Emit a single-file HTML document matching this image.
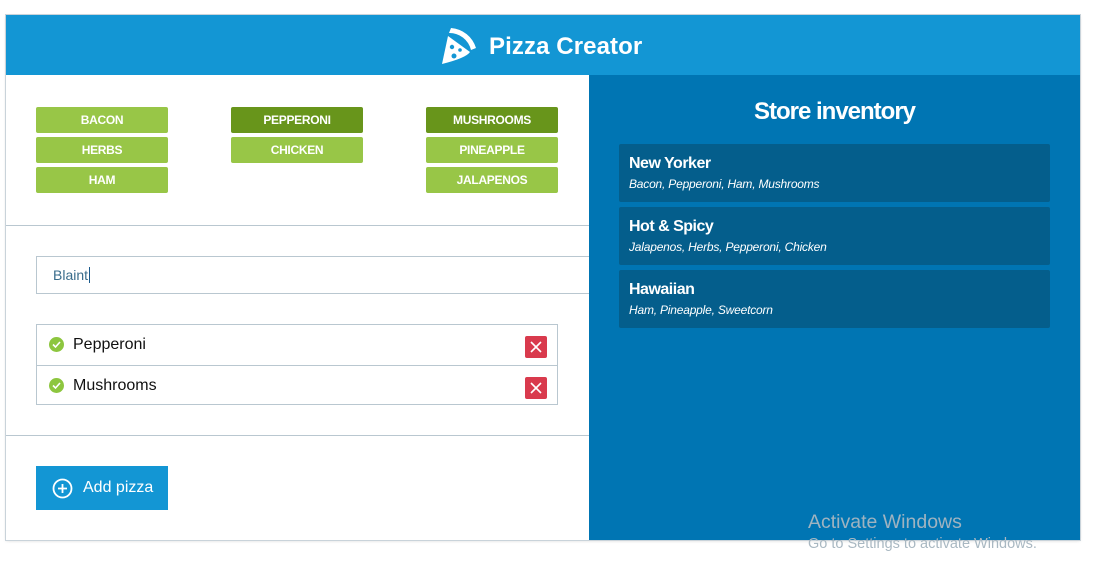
<!DOCTYPE html>
<html><head><style>
*{box-sizing:border-box;margin:0;padding:0}
body{width:1098px;height:568px;background:#fff;font-family:"Liberation Sans",sans-serif;position:relative;overflow:hidden}
.wrap{position:absolute;left:6px;top:15px;width:1074px;height:525px;overflow:hidden;box-shadow:0 0 0 1px #c9d3da,0 1px 3px rgba(0,0,0,.15)}
.hdr{position:absolute;left:0;top:0;width:1074px;height:60px;background:#1396d4;color:#fff}
.hdr .t{position:absolute;left:483px;top:18px;font-size:24px;font-weight:bold;letter-spacing:0.1px}
.right{position:absolute;left:583px;top:60px;width:491px;height:465px;background:#0075b3;color:#fff}
.right h2{position:absolute;left:0;width:491px;text-align:center;top:23px;font-size:24px;font-weight:bold;letter-spacing:-1px}
.card{position:absolute;left:30px;width:431px;height:58px;background:#045e8c;border-radius:2px}
.card b{position:absolute;left:10px;top:11px;font-size:16px;letter-spacing:-0.5px}
.card i{position:absolute;left:10px;top:33px;font-size:12px;letter-spacing:-0.2px}
.btn{position:absolute;width:132px;height:26px;border-radius:2px;background:#98c647;color:#fff;font-size:12px;font-weight:bold;text-align:center;line-height:26px;letter-spacing:-0.3px}
.btn.d{background:#68951b}
.hr{position:absolute;left:0;width:583px;height:1px;background:#b9c7d0}
.inp{position:absolute;left:30px;top:241px;width:560px;height:38px;border:1px solid #b9c7d0;font-size:14px;color:#3a6d8c;padding:10px 16px}
.list{position:absolute;left:30px;top:309px;width:522px;height:81px;border:1px solid #b9c7d0}
.row{height:40px;position:relative;font-size:16px;color:#111}
.row+.row{border-top:1px solid #b9c7d0}
.row span{position:absolute;left:36px;top:11px}
.chk{position:absolute;left:12px;top:12px;width:15px;height:15px;border-radius:50%;background:#8dc63f}
.x{position:absolute;left:488px;top:11px;width:22px;height:22px;background:#d93a4d;border-radius:2px}
.add{position:absolute;left:30px;top:451px;width:132px;height:44px;background:#1396d4;color:#fff;font-size:16px}
</style></head><body>
<div class="wrap">
<div class="hdr">
<svg style="position:absolute;left:434px;top:11px" width="38" height="40" viewBox="0 0 38 40"><path d="M11 2 A28 28 0 0 1 36 22 L31 24 A22 22 0 0 0 9 7Z" fill="#fff"/><path d="M8 10 L30 26 Q26 32 2 38Z" fill="#fff"/><circle cx="12" cy="21" r="2.2" fill="#1396d4"/><circle cx="20" cy="24" r="1.8" fill="#1396d4"/><circle cx="14" cy="30" r="2.5" fill="#1396d4"/></svg>
<div class="t">Pizza Creator</div>
</div>
<div class="btn" style="left:30px;top:92px">BACON</div>
<div class="btn" style="left:30px;top:122px">HERBS</div>
<div class="btn" style="left:30px;top:152px">HAM</div>
<div class="btn d" style="left:225px;top:92px">PEPPERONI</div>
<div class="btn" style="left:225px;top:122px">CHICKEN</div>
<div class="btn d" style="left:420px;top:92px">MUSHROOMS</div>
<div class="btn" style="left:420px;top:122px">PINEAPPLE</div>
<div class="btn" style="left:420px;top:152px">JALAPENOS</div>
<div class="hr" style="top:210px"></div>
<div class="inp">Blaint<span style="border-left:1px solid #1a5a8c;margin-left:1px"></span></div>
<div class="list">
<div class="row"><div class="chk"><svg width="15" height="15"><path d="M4 7.5l2.5 2.5 4.5-5" stroke="#fff" stroke-width="1.6" fill="none"/></svg></div><span>Pepperoni</span><div class="x"><svg width="22" height="22"><path d="M6 6l10 10M16 6L6 16" stroke="#fff" stroke-width="1.6"/></svg></div></div>
<div class="row"><div class="chk"><svg width="15" height="15"><path d="M4 7.5l2.5 2.5 4.5-5" stroke="#fff" stroke-width="1.6" fill="none"/></svg></div><span>Mushrooms</span><div class="x"><svg width="22" height="22"><path d="M6 6l10 10M16 6L6 16" stroke="#fff" stroke-width="1.6"/></svg></div></div>
</div>
<div class="hr" style="top:420px"></div>
<div class="add"><svg style="position:absolute;left:16px;top:12px" width="21" height="21"><circle cx="10.5" cy="10.5" r="9" stroke="#fff" stroke-width="1.8" fill="none"/><path d="M10.5 6v9M6 10.5h9" stroke="#fff" stroke-width="1.8"/></svg><span style="position:absolute;left:47px;top:13px">Add pizza</span></div>
<div class="right">
<h2>Store inventory</h2>
<div class="card" style="top:69px"><b>New Yorker</b><i>Bacon, Pepperoni, Ham, Mushrooms</i></div>
<div class="card" style="top:132px"><b>Hot &amp; Spicy</b><i>Jalapenos, Herbs, Pepperoni, Chicken</i></div>
<div class="card" style="top:195px"><b>Hawaiian</b><i>Ham, Pineapple, Sweetcorn</i></div>
</div>
</div>
<div style="position:absolute;left:808px;top:511px;font-size:19.5px;color:#9fb3c0">Activate Windows</div>
<div style="position:absolute;left:808px;top:536px;font-size:14.5px;color:#a9b8c2">Go to Settings to activate Windows.</div>
</body></html>
